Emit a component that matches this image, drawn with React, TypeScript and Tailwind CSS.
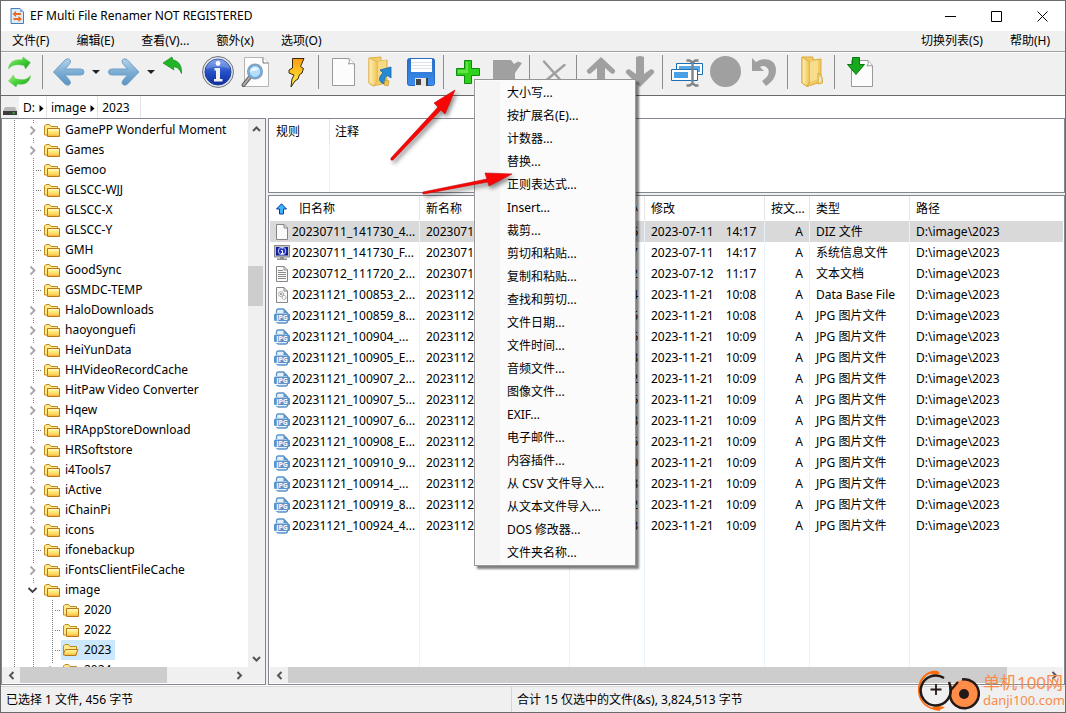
import { useState } from "react";
import type { ReactNode } from "react";

const leftMenus = ["文件(F)", "编辑(E)", "查看(V)...", "额外(x)", "选项(O)"];
const rightMenus = ["切换列表(S)", "帮助(H)"];

const ruleMenu = [
  "大小写...",
  "按扩展名(E)...",
  "计数器...",
  "替换...",
  "正则表达式...",
  "Insert...",
  "裁剪...",
  "剪切和粘贴...",
  "复制和粘贴...",
  "查找和剪切...",
  "文件日期...",
  "文件时间...",
  "音频文件...",
  "图像文件...",
  "EXIF...",
  "电子邮件...",
  "内容插件...",
  "从 CSV 文件导入...",
  "从文本文件导入...",
  "DOS 修改器...",
  "文件夹名称...",
];

type Node = { name: string; closed?: boolean; open?: boolean; child?: boolean };

const tree: Node[] = [
  { name: "GamePP Wonderful Moment", closed: true },
  { name: "Games", closed: true },
  { name: "Gemoo" },
  { name: "GLSCC-WJJ" },
  { name: "GLSCC-X" },
  { name: "GLSCC-Y" },
  { name: "GMH" },
  { name: "GoodSync", closed: true },
  { name: "GSMDC-TEMP" },
  { name: "HaloDownloads", closed: true },
  { name: "haoyonguefi", closed: true },
  { name: "HeiYunData", closed: true },
  { name: "HHVideoRecordCache" },
  { name: "HitPaw Video Converter", closed: true },
  { name: "Hqew", closed: true },
  { name: "HRAppStoreDownload" },
  { name: "HRSoftstore", closed: true },
  { name: "i4Tools7", closed: true },
  { name: "iActive", closed: true },
  { name: "iChainPi", closed: true },
  { name: "icons", closed: true },
  { name: "ifonebackup" },
  { name: "iFontsClientFileCache", closed: true },
  { name: "image", open: true },
  { name: "2020", child: true },
  { name: "2022", child: true },
  { name: "2023", child: true },
  { name: "2024", child: true, closed: true },
];

// icon, name, size, date, time, type
const files = [
  ["blank", "20230711_141730_4...", "456", "2023-07-11", "14:17", "DIZ 文件"],
  ["info", "20230711_141730_F...", "1,227", "2023-07-11", "14:17", "系统信息文件"],
  ["text", "20230712_111720_2...", "2,092", "2023-07-12", "11:17", "文本文档"],
  ["db", "20231121_100853_2...", "16,384", "2023-11-21", "10:08", "Data Base File"],
  ["jpg", "20231121_100859_8...", "345,215", "2023-11-21", "10:08", "JPG 图片文件"],
  ["jpg", "20231121_100904_...", "345,216", "2023-11-21", "10:09", "JPG 图片文件"],
  ["jpg", "20231121_100905_E...", "345,218", "2023-11-21", "10:09", "JPG 图片文件"],
  ["jpg", "20231121_100907_2...", "345,212", "2023-11-21", "10:09", "JPG 图片文件"],
  ["jpg", "20231121_100907_5...", "345,216", "2023-11-21", "10:09", "JPG 图片文件"],
  ["jpg", "20231121_100907_6...", "345,218", "2023-11-21", "10:09", "JPG 图片文件"],
  ["jpg", "20231121_100908_E...", "345,216", "2023-11-21", "10:09", "JPG 图片文件"],
  ["jpg", "20231121_100910_9...", "345,210", "2023-11-21", "10:09", "JPG 图片文件"],
  ["jpg", "20231121_100914_...", "345,218", "2023-11-21", "10:09", "JPG 图片文件"],
  ["jpg", "20231121_100919_8...", "345,212", "2023-11-21", "10:09", "JPG 图片文件"],
  ["jpg", "20231121_100924_4...", "345,403", "2023-11-21", "10:09", "JPG 图片文件"],
];

function Gradients() {
  return (
    <svg className="absolute h-0 w-0" aria-hidden="true">
      <defs>
        <linearGradient id="green" x1="0" y1="0" x2="1" y2="1">
          <stop offset="0" stopColor="#9df07c" />
          <stop offset="0.5" stopColor="#45cf3a" />
          <stop offset="1" stopColor="#1f9a1c" />
        </linearGradient>
        <linearGradient id="steel" x1="0" y1="0" x2="0" y2="1">
          <stop offset="0" stopColor="#b7d3e8" />
          <stop offset="0.5" stopColor="#7daed4" />
          <stop offset="1" stopColor="#5a93c2" />
        </linearGradient>
        <linearGradient id="royal" x1="0" y1="0" x2="0" y2="1">
          <stop offset="0" stopColor="#6f95e6" />
          <stop offset="0.5" stopColor="#2450c8" />
          <stop offset="1" stopColor="#0c2c9c" />
        </linearGradient>
        <linearGradient id="fire" x1="0" y1="0" x2="0" y2="1">
          <stop offset="0" stopColor="#ff9a10" />
          <stop offset="0.5" stopColor="#ffc824" />
          <stop offset="1" stopColor="#fff45c" />
        </linearGradient>
        <linearGradient id="gold" x1="0" y1="0" x2="1" y2="0">
          <stop offset="0" stopColor="#fff3b8" />
          <stop offset="1" stopColor="#eebf4c" />
        </linearGradient>
        <linearGradient id="folder" x1="0" y1="0" x2="0" y2="1">
          <stop offset="0" stopColor="#fff6a0" />
          <stop offset="0.6" stopColor="#ffe066" />
          <stop offset="1" stopColor="#f9ad3c" />
        </linearGradient>
        <linearGradient id="disk" x1="0" y1="0" x2="0" y2="1">
          <stop offset="0" stopColor="#2a6fc4" />
          <stop offset="1" stopColor="#3b8df0" />
        </linearGradient>
      </defs>
    </svg>
  );
}

const backPath =
  "M3.5 19 15.5 6.5Q18.5 4.500 20.500 7.500 20.500 10 19 11.500L15 16H30.500Q34 16 34 19T30.500 22H15L19 26.500Q20.500 28 20.500 30.500 18.500 33.500 15.500 31.500Z";

const icons: Record<string, ReactNode> = {
  refresh: (
    <g fill="url(#green)" stroke="#5fc455" strokeWidth="0.4">
      <path d="M7.500 16C7.500 10 13 5.500 21 7L22 4 29.500 9.500 24.500 16 23 12.500C16 11 11 11.500 7.500 16Z" />
      <path d="M29.500 22.500C29 29 24 32.500 16.500 31L15 34 7.500 28 12.500 22 14 25.500C21 27.500 26 27 29.500 22.500Z" />
    </g>
  ),
  back: <path d={backPath} fill="url(#steel)" stroke="#6d9fc8" />,
  forward: <path d={backPath} transform="translate(37.500 0) scale(-1 1)" fill="url(#steel)" stroke="#6d9fc8" />,
  up1: <path d="M3 10 12 4 13 7C19 8 22 13 21.500 20.500 19 15 17 14 13 14L14 17Z" fill="#21b424" stroke="#138a1c" strokeWidth="0.7" />,
  info: (
    <>
      <circle cx="19" cy="19" r="15.500" fill="#dfe2e8" stroke="#70757f" />
      <circle cx="19" cy="19" r="13" fill="url(#royal)" stroke="#20409a" />
      <path d="M7 16a12 11 0 0 1 24 0c-8-3-16-3-24 0Z" fill="#fff" opacity="0.180" />
      <circle cx="19" cy="10.500" r="2.400" fill="#fff" />
      <path d="M15.500 15H21V26H23.500V28.500H15V26H17V17.500H15.500Z" fill="#f1f1f1" />
    </>
  ),
  search: (
    <>
      <path d="M6.500 4.500H25L30.500 10V33.500H6.500Z" fill="#fcfcfc" stroke="#b4b4b4" />
      <path d="M25 4.500V10H30.500" fill="#fff" stroke="#777" />
      <path d="M12 24 5.500 32" stroke="#555" strokeWidth="4" strokeLinecap="round" />
      <path d="M12 24 5.500 32" stroke="#aaa" strokeWidth="2" strokeLinecap="round" />
      <circle cx="17" cy="18.500" r="7.300" fill="#b6ddfa" stroke="#8e9cb0" strokeWidth="1.500" />
      <path d="M12 19c1-6 6-5 9-4-2 4-5 2-9 4Z" fill="#e9f6ff" />
      <circle cx="17" cy="18.500" r="6" fill="none" stroke="#5ba6e2" strokeWidth="1.200" />
    </>
  ),
  bolt: <path d="M15.500 5.500H27L23.500 13.500 26.500 15.500 25 20 22.500 21.500 21 26 18 28 14 34 15 26 17 22 12 20V17L15.500 15Z" fill="url(#fire)" stroke="#382a10" />,
  page: (
    <>
      <path d="M8.500 5.500H25L30.500 11V32.500H8.500Z" fill="#fcfcfc" stroke="#999" />
      <path d="M25 5.500Q26 9 24.500 11 27 10 30.500 11" fill="#fff" stroke="#999" />
    </>
  ),
  open: (
    <>
      <path d="M6 5 18 4V8L24 7V30L10 33 6 30Z" fill="#f1cd68" stroke="#dbb14a" />
      <path d="M6 5 15 9V27L11 33 6 30Z" fill="url(#gold)" stroke="#e2b654" />
      <path d="M15 9 23 7V24L15 27Z" fill="#f6da85" />
      <path d="M17 17 28 14 28 25 24.500 22.500C21 24 21 28 24 31 16 31 14 25 20 20Z" fill="#278bd4" stroke="#1263a4" strokeWidth="0.800" />
      <path d="m22 27 4 1-1 5-4-1Z" fill="#f1c64d" stroke="#b98b22" strokeWidth="0.600" />
    </>
  ),
  save: (
    <>
      <rect x="5.500" y="5.500" width="27" height="27" rx="2" fill="url(#disk)" stroke="#2a6cc4" />
      <path d="M9 6H30V19H9Z" fill="#fff" />
      <path d="M9 9.500H30M9 12.500H30M9 15.500H30" stroke="#dde2e8" />
      <path d="M13 25H26V33H13Z" fill="#e5e5e5" />
      <path d="M14 26H19V32H14Z" fill="#444" />
      <path d="M24 25h2v8h-2Z" fill="#444" />
    </>
  ),
  plus: (
    <>
      <path d="M15.500 7.500H22.500V15.500H30.500V22.500H22.500V30.500H15.500V22.500H7.500V15.500H15.500Z" fill="#2ed21a" stroke="#0d8b0d" />
      <path d="M17 9V17H9V20H19V9Z" fill="#8af06b" opacity="0.600" />
    </>
  ),
  edit: <path d="M5 7H23L26 11 30 8.500 34 10 27 20V31H5Z" fill="#a0a0a0" />,
  remove: <path d="M9 8.500 28 30M29.500 12 8 30" stroke="#a0a0a0" strokeWidth="2.500" strokeLinecap="round" />,
  up: <path d="M19 4 33 17Q34 20 30 21L23 15V34H15V15L8 21Q4 20 5 17Z" fill="#a0a0a0" />,
  down: <path d="M19 34 33 20Q34 17 30 16L23 21V4Q19 2 15 4V21L8 16Q4 17 5 20Z" fill="#a0a0a0" />,
  rename: (
    <>
      <path d="M8.500 10.500H34.500V21.500H8.500Z" fill="#fff" stroke="#1a6fb5" />
      <path d="M11 13H32V19H11Z" fill="#58a9e3" />
      <path d="M3.500 16.500H29.500V27.500H3.500Z" fill="#fff" stroke="#1a6fb5" />
      <path d="M6 19H20V25H6Z" fill="#49a0e4" />
      <path d="M18.500 7.500H21.500L24.500 9.500 27.500 7.500H30.500M18.500 32.500H21.500L24.500 30.500 27.500 32.500H30.500M24.500 9V31" fill="none" stroke="#808487" strokeWidth="2.400" />
    </>
  ),
  circle: <circle cx="18.500" cy="18.500" r="15.500" fill="#a0a0a0" />,
  undo: <path d="M6 5 10 9C17 4 30 5 30 17 30 24 26 29 20 33L16 28C22 24 24 20 22 16 20 13 17 12 14 14L18 18H6Z" fill="#a0a0a0" />,
  folder: (
    <>
      <path d="M9 4 20 4V7L28 6V29L14 33.500 9 30Z" fill="#f1cb62" stroke="#d9ab40" />
      <path d="M9 4 17 9V28L14 33.500 9 30Z" fill="url(#gold)" stroke="#dba83b" />
      <path d="M17 9 25 7V26L17 29Z" fill="#f7dd8e" />
      <path d="M25 20Q30 22 29.500 30L25 31Z" fill="#f6d472" stroke="#d9ab40" />
      <path d="M27 24v5" stroke="#d9efff" strokeWidth="1.500" />
    </>
  ),
  pagein: (
    <>
      <path d="M11.500 7.500H28L32.500 12.500V33.500H11.500Z" fill="#fcfcfc" stroke="#999" />
      <path d="M28 7.500Q29 11 27 13 30 12 32.500 13" fill="#fff" stroke="#999" />
      <path d="M12.500 4.500H19.500V11.500H24.500L16 21.500 7.500 11.500H12.500Z" fill="#16a91d" stroke="#08780f" />
    </>
  ),
};

function ToolButton({ icon, label, onClick }: { icon: string; label: string; onClick?: () => void }) {
  return (
    <button type="button" aria-label={label} title={label} onClick={onClick} className="h-10 w-[39px] shrink-0">
      <svg viewBox="0 0 39 40" className="h-10 w-[39px]">
        {icons[icon]}
      </svg>
    </button>
  );
}

function DropButton({ label }: { label: string }) {
  return (
    <button type="button" aria-label={label} className="flex h-10 w-4 shrink-0 items-center justify-center pr-[2px] pb-[2px]">
      <svg viewBox="0 0 8 4" className="h-1 w-2">
        <path d="M0 0H8L4 4Z" fill="#222" />
      </svg>
    </button>
  );
}

function Separator() {
  return (
    <div className="w-2 shrink-0 pt-[2px] pl-[2px]">
      <div className="h-[34px] w-px bg-[#8c8c8c]" />
    </div>
  );
}

function Chevron({ dir }: { dir: "up" | "down" | "left" | "right" }) {
  const paths = {
    up: "M2 7 5.500 3.500 9 7",
    down: "M2 4 5.500 7.500 9 4",
    left: "M7.500 2 4 5.500 7.500 9",
    right: "M3.500 2 7 5.500 3.500 9",
  };
  return (
    <svg viewBox="0 0 11 11" className="h-[11px] w-[11px]">
      <path d={paths[dir]} fill="none" stroke="#555" strokeWidth="2" />
    </svg>
  );
}

function TreeFolder({ opened }: { opened?: boolean }) {
  return (
    <svg viewBox="0 0 17 16" className="h-4 w-[17px] shrink-0">
      <path d="M0.500 13V4L2 2.500H5.500L7 4.500H13.500V13Z" fill="#ffe98a" stroke="#c08a22" />
      {opened ? (
        <path d="M2.500 7.500H15L12.500 13.500H2L0.500 12Z" fill="url(#folder)" stroke="#b87a18" />
      ) : (
        <>
          <path d="M3.500 6.500H15.500V14.500H3.500Z" fill="url(#folder)" stroke="#b87a18" />
          <path d="M5 8H14.500" stroke="#fffbd8" />
        </>
      )}
    </svg>
  );
}

// dotted connector lines in front of a folder
function TreeGuide({ node }: { node: Node }) {
  const x = node.child ? 50.5 : 31.5;
  const hasToggle = node.closed || node.open;
  return (
    <svg
      width={node.child ? 59 : 40}
      height="20"
      className="shrink-0"
      fill="none">
      <g stroke="#808080" strokeDasharray="1 1" shapeRendering="crispEdges">
        <path d="M12.500 0V20" />
        {node.child && <path d="M31.500 0V20" />}
        {hasToggle ? (
          <path d={`M${x} 0V3M${x} 18V20M${x + 8} 10.500H${x + 12}`} />
        ) : (
          <path d={`M${x} 0V20M${x + 2} 10.500H${x + 10}`} />
        )}
      </g>
      {node.closed && <path d={`M${x - 3} 6.500l4 4-4 4`} stroke="#a6a6a6" strokeWidth="1.800" />}
      {node.open && <path d={`M${x - 5} 8l4 4 4-4`} stroke="#404040" strokeWidth="1.800" />}
    </svg>
  );
}

function FileIcon({ kind }: { kind: string }) {
  if (kind === "jpg") {
    return (
      <svg viewBox="0 0 16 16" className="h-4 w-4 shrink-0">
        <path d="M2.500 5V3Q2.500 1 4.500 1H9.500L13.500 5V6" fill="#e6f0f9" stroke="#5b93c9" strokeWidth="1.300" />
        <path d="M9.500 1V5H13.500Z" fill="#5b93c9" />
        <path d="M2.500 12V13.500Q2.500 15 4.500 15H11.500Q13.500 15 13.500 13V12" fill="#e6f0f9" stroke="#5b93c9" strokeWidth="1.300" />
        <rect y="5.500" width="16" height="7.500" rx="1.500" fill="#5b93c9" />
        <text x="8" y="11.800" textAnchor="middle" fontSize="7" fontWeight="700" fill="#fff">
          JPG
        </text>
      </svg>
    );
  }
  if (kind === "info") {
    return (
      <svg viewBox="0 0 16 16" className="h-4 w-4 shrink-0">
        <path d="M0.500 0.500H15.500V12H0.500Z" fill="#c4c4c4" stroke="#8a8a8a" />
        <path d="M2 2H14V10.500H2Z" fill="#101c9c" />
        <circle cx="8" cy="6" r="3.800" fill="#2436c0" stroke="#c4d0ff" />
        <path d="M7 5.500H8.500V8.500M7 8.500H9.500M7.500 3.200h1.200" stroke="#fff" fill="none" />
        <path d="M6 12H10V13.500H13V15H3V13.500H6Z" fill="#8f8f8f" />
      </svg>
    );
  }
  return (
    <svg viewBox="0 0 16 16" className="h-4 w-4 shrink-0">
      <path d="M2.500 0.500H10L13.500 4V15.500H2.500Z" fill="#fafafa" stroke="#868686" />
      <path d="M10 0.500V4H13.500" fill="none" stroke="#868686" />
      {kind === "text" && <path d="M4 4.500H9M4 6.500H12M4 8.500H12M4 10.500H12M4 12.500H12" stroke="#8a8a8a" />}
      {kind === "db" && (
        <g fill="none" stroke="#8a8a8a">
          <circle cx="7" cy="7" r="2.500" strokeDasharray="1.200 0.600" />
          <circle cx="7" cy="7" r="0.800" />
          <circle cx="10" cy="10.500" r="2" strokeDasharray="1.200 0.600" />
        </g>
      )}
    </svg>
  );
}

function HScroll({ thumb, corner }: { thumb: string; corner?: boolean }) {
  return (
    <div className={`flex h-4 shrink-0 items-stretch bg-[#f0f0f0] ${corner ? "pr-[17px]" : ""}`}>
      <button type="button" aria-label="向左滚动" className="flex w-[18px] items-center justify-center">
        <Chevron dir="left" />
      </button>
      <div className="flex-1">
        <div className={`h-full bg-[#cdcdcd] ${thumb}`} />
      </div>
      <button type="button" aria-label="向右滚动" className="flex w-[18px] items-center justify-center">
        <Chevron dir="right" />
      </button>
    </div>
  );
}

function Watermark() {
  return (
    <div className="absolute right-0 bottom-0 flex h-[43px] items-center gap-[3px] text-[#f98b4b]">
      <svg viewBox="0 0 62 43" className="h-[43px] w-[62px]" fill="none">
        <path d="M20 3C8 1 0 12 1 23 2 33 9 40 22 41" stroke="#ff6b0a" strokeWidth="2" />
        <path d="M12 5Q17-1 22 4L19 6ZM14 38Q20 44 27 38L20 37Z" fill="#ff6b0a" />
        <path d="M26 9A15 15 0 1 0 32 17" stroke="#231a18" strokeWidth="2.500" />
        <path d="M18 15V26M12.500 20.500H23.500" stroke="#231a18" strokeWidth="1.800" />
        <circle cx="46" cy="25" r="14" fill="#ff8c47" />
        <path d="M31 13Q34 20 32 27A14.500 14.500 0 1 0 44 10.500" stroke="#231a18" strokeWidth="2.500" />
        <path d="M33 21 40 13" stroke="#231a18" strokeWidth="2" />
        <circle cx="46" cy="25" r="5" fill="#231a18" />
      </svg>
      <div className="flex flex-col">
        <span className="text-[17px] leading-[19px]">单机100网</span>
        <span className="text-[13px] leading-4">danji100.com</span>
      </div>
    </div>
  );
}

function RedArrows() {
  return (
    <svg viewBox="0 0 140 130" className="pointer-events-none absolute top-[75px] left-[379px] z-20 h-[130px] w-[140px] drop-shadow-[2px_3px_2px_rgba(0,0,0,0.45)]">
      <g fill="#f80606" stroke="#c40808" strokeWidth="0.600">
        <path d="M11 82 58 31 54 27 75 14 65 38 61 34 13 84Q10 85 11 82Z" />
        <path d="M43 116 107 103 105 97 132 98 109 110 108 106 44 118Q42 118 43 116Z" />
      </g>
    </svg>
  );
}

export default function App() {
  const [menuOpen, setMenuOpen] = useState(true);
  const [selected, setSelected] = useState(0);
  const [folder, setFolder] = useState("2023");

  return (
    <div className="relative flex h-screen flex-col overflow-hidden border border-[#6b6b6b] bg-white font-['Noto_Sans','Noto_Sans_CJK_SC',sans-serif] text-xs text-black">
      <Gradients />

      {/* 标题栏 */}
      <header className="flex h-[30px] shrink-0 items-center">
        <svg viewBox="0 0 14 16" className="mr-[6px] ml-[9px] h-4 w-[14px]">
          <path d="M1 0.500H10L13.500 4V15.500H1Z" fill="#dcebfa" stroke="#4a7cb5" />
          <path d="M10 0.500V4H13.500Z" fill="#7fa9d8" />
          <path d="M2.500 6 6 3V5H11V7H6V9ZM12 11 8.500 8V10H3.500V12H8.500V14Z" fill="#f06a1c" />
        </svg>
        <h1>EF Multi File Renamer NOT REGISTERED</h1>
        <div className="ml-auto flex h-full">
          <button type="button" aria-label="最小化" className="flex w-[46px] items-center justify-center">
            <svg viewBox="0 0 11 11" className="h-[11px] w-[11px]">
              <path d="M0 5.500H11" stroke="#000" />
            </svg>
          </button>
          <button type="button" aria-label="最大化" className="flex w-[46px] items-center justify-center">
            <svg viewBox="0 0 11 11" className="h-[11px] w-[11px]">
              <path d="M0.500 0.500H10.500V10.500H0.500Z" fill="none" stroke="#000" />
            </svg>
          </button>
          <button type="button" aria-label="关闭" className="flex w-[46px] items-center justify-center">
            <svg viewBox="0 0 11 11" className="h-[11px] w-[11px]">
              <path d="M0.500 0.500 10.500 10.500M10.500 0.500 0.500 10.500" stroke="#000" />
            </svg>
          </button>
        </div>
      </header>

      {/* 菜单栏 */}
      <nav className="flex h-[21px] shrink-0 justify-between border-b border-[#a0a0a0] bg-[#f0f0f0] pr-[15px] pl-[11px]">
        <div className="flex gap-[27px]">
          {leftMenus.map((m) => (
            <button type="button" key={m}>{m}</button>
          ))}
        </div>
        <div className="flex gap-[27px]">
          {rightMenus.map((m) => (
            <button type="button" key={m}>{m}</button>
          ))}
        </div>
      </nav>

      {/* 工具栏 */}
      <div className="flex h-11 shrink-0 border-t border-b border-t-white border-b-[#696969] bg-[#f0f0f0]">
        <ToolButton icon="refresh" label="刷新" />
        <Separator />
        <div className="ml-[2px] flex">
          <ToolButton icon="back" label="后退" />
          <DropButton label="后退历史" />
          <ToolButton icon="forward" label="前进" />
          <DropButton label="前进历史" />
          <ToolButton icon="up1" label="上级目录" />
          <ToolButton icon="info" label="信息" />
          <ToolButton icon="search" label="预览" />
          <ToolButton icon="bolt" label="执行" />
        </div>
        <Separator />
        <ToolButton icon="page" label="新建" />
        <ToolButton icon="open" label="打开" />
        <ToolButton icon="save" label="保存" />
        <Separator />
        <div className="relative">
          <ToolButton icon="plus" label="添加规则" onClick={() => setMenuOpen(!menuOpen)} />
          {menuOpen && (
            <div
              role="menu"
              className="absolute top-[26px] left-[25px] z-10 w-[162px] border border-[#979797] bg-[#fbfbfb] p-px shadow-[3px_3px_2px_rgba(0,0,0,0.5)]">
              <div className="border-l-[24px] border-[#f5f5f5]">
                {ruleMenu.map((item) => (
                  <button
                    type="button"
                    role="menuitem"
                    key={item}
                    onClick={() => setMenuOpen(false)}
                    className="block h-[23px] w-full pl-[7px] text-left whitespace-nowrap hover:bg-[#cce8ff]">
                    {item}
                  </button>
                ))}
              </div>
            </div>
          )}
        </div>
        <ToolButton icon="edit" label="编辑规则" />
        <Separator />
        <ToolButton icon="remove" label="删除规则" />
        <Separator />
        <ToolButton icon="up" label="上移" />
        <ToolButton icon="down" label="下移" />
        <Separator />
        <ToolButton icon="rename" label="重命名" />
        <ToolButton icon="circle" label="停止" />
        <ToolButton icon="undo" label="撤销" />
        <Separator />
        <ToolButton icon="folder" label="文件夹" />
        <Separator />
        <ToolButton icon="pagein" label="导入" />
      </div>

      {/* 地址栏 */}
      <div className="flex h-[22px] shrink-0 items-stretch">
        <div className="flex w-[18px] items-end justify-center bg-[#f0f0f0] pb-[3px]">
          <svg viewBox="0 0 14 8" className="h-2 w-[14px]">
            <path d="M2 0H12L14 4H0Z" fill="#b9b9b9" />
            <path d="M0 4H14V8H0Z" fill="#3c3c3c" />
            <path d="M9.500 6H12" stroke="#44e04b" />
          </svg>
        </div>
        {["D:", "image", "2023"].map((p, i) => (
          <button type="button" key={p} className="flex items-center gap-1 border-r border-[#e3e3e3] pt-[2px] pr-[2px] pl-1 last:pr-[10px]">
            {p}
            {i < 2 && (
              <svg viewBox="0 0 5 7" className="h-[7px] w-[5px]">
                <path d="M0.500 0 4.500 3.500 0.500 7Z" />
              </svg>
            )}
          </button>
        ))}
      </div>

      <main className="flex min-h-0 flex-1 gap-[2px] bg-[#f0f0f0]">
        {/* 目录树 */}
        <section className="flex w-[265px] shrink-0 flex-col border border-[#828790] bg-white pb-[1px]">
          <div className="flex min-h-0 flex-1">
            <ul className="min-w-0 flex-1 overflow-hidden pt-[1px]">
              {tree.map((n) => (
                <li key={n.name} className="flex h-5 items-center">
                  <TreeGuide node={n} />
                  <button
                    type="button"
                    onClick={() => setFolder(n.name)}
                    className={`flex h-5 items-center gap-1 pr-1 pl-[2px] whitespace-nowrap ${folder === n.name ? "bg-[#cce8ff]" : ""}`}>
                    <TreeFolder opened={folder === n.name} />
                    {n.name}
                  </button>
                </li>
              ))}
            </ul>
            <div className="flex w-[17px] flex-col items-center bg-[#f0f0f0] pr-px">
              <button type="button" aria-label="向上滚动" className="flex h-5 items-center">
                <Chevron dir="up" />
              </button>
              <div className="w-full flex-1 pt-[127px]">
                <div className="h-10 w-[15px] bg-[#cdcdcd]" />
              </div>
              <button type="button" aria-label="向下滚动" className="flex h-[17px] items-center">
                <Chevron dir="down" />
              </button>
            </div>
          </div>
          <HScroll thumb="w-[70%]" corner />
        </section>

        <div className="flex min-w-0 flex-1 flex-col gap-[2px]">
          {/* 规则列表 */}
          <section className="h-[75px] shrink-0 border border-[#828790] bg-white px-[1px]">
            <table className="h-full w-full table-fixed border-separate border-spacing-0">
              <thead>
                <tr className="h-[25px] text-left">
                  <th className="w-[60px] border-r border-[#e5e5e5] py-0 pl-[6px] font-normal">规则</th>
                  <th className="py-0 pl-[5px] font-normal">注释</th>
                </tr>
              </thead>
              <tbody>
                <tr>
                  <td className="border-r border-[#e8f2fc]" />
                  <td />
                </tr>
              </tbody>
            </table>
          </section>

          {/* 文件列表 */}
          <section className="flex min-h-0 flex-1 flex-col border border-[#828790] bg-white px-[1px] pb-[1px]">
            <div className="min-h-0 flex-1 overflow-hidden">
              <table className="h-full w-full table-fixed border-separate border-spacing-0">
                <colgroup>
                  <col className="w-[150px]" />
                  <col className="w-[150px]" />
                  <col className="w-[75px]" />
                  <col className="w-[120px]" />
                  <col className="w-[45px]" />
                  <col className="w-[100px]" />
                  <col />
                </colgroup>
                <thead>
                  <tr className="h-[25px] text-left [&>th]:border-r [&>th]:border-[#e5e5e5] [&>th]:px-[6px] [&>th]:py-0 [&>th]:font-normal [&>th]:whitespace-nowrap [&>th:last-child]:border-r-0">
                    <th>
                      <span className="flex items-center gap-[11px]">
                        <svg viewBox="0 0 12 12" className="h-3 w-3">
                          <path d="M5.500 0.800 10.500 6H7.500V11H3.500V6H0.500Z" fill="#39b4ff" stroke="#14379c" />
                        </svg>
                        旧名称
                      </span>
                    </th>
                    <th>新名称</th>
                    <th className="text-right">大小</th>
                    <th>修改</th>
                    <th>按文...</th>
                    <th>类型</th>
                    <th>路径</th>
                  </tr>
                </thead>
                <tbody>
                  {files.map(([icon, name, size, date, time, type], i) => (
                    <tr
                      key={name}
                      onClick={() => setSelected(i)}
                      className={`h-[21px] [&>td]:overflow-hidden [&>td]:border-r [&>td]:border-[#e8f2fc] [&>td]:px-[6px] [&>td]:py-0 [&>td]:whitespace-nowrap [&>td:last-child]:border-r-0 ${selected === i ? "bg-[#d9d9d9] [&>td]:border-[#c8d2dc]" : ""}`}>
                      <td>
                        <span className="-mx-[2px] flex items-center gap-[2px]">
                          <FileIcon kind={icon} />
                          {name}
                        </span>
                      </td>
                      <td>{name}</td>
                      <td className="text-right">{size}</td>
                      <td>
                        <span className="flex gap-3">
                          <span>{date}</span>
                          <span>{time}</span>
                        </span>
                      </td>
                      <td className="text-right">A</td>
                      <td>{type}</td>
                      <td>D:\image\2023</td>
                    </tr>
                  ))}
                  <tr aria-hidden="true" className="[&>td]:border-r [&>td]:border-[#e8f2fc] [&>td:last-child]:border-r-0">
                    <td />
                    <td />
                    <td />
                    <td />
                    <td />
                    <td />
                    <td />
                  </tr>
                </tbody>
              </table>
            </div>
            <HScroll thumb="w-[95%]" />
          </section>
        </div>
      </main>

      {/* 状态栏 */}
      <footer className="mt-px flex h-[26px] shrink-0 items-center border-t border-[#d7d7d7] bg-[#f0f0f0]">
        <div className="flex h-full w-[511px] items-center border-r border-[#d7d7d7] pl-[5px]">已选择 1 文件, 456 字节</div>
        <div className="flex h-full flex-1 items-center pl-[5px]">合计 15 仅选中的文件(&amp;s), 3,824,513 字节</div>
      </footer>

      <RedArrows />
      <Watermark />
    </div>
  );
}
